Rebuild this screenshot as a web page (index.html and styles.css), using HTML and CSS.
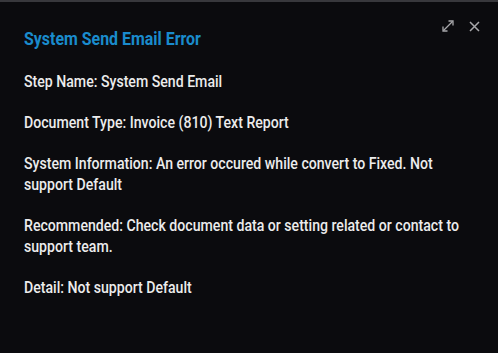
FILE: index.html
```html
<!DOCTYPE html>
<html lang="en">
<head>
<meta charset="utf-8">
<title>System Send Email Error</title>
<link rel="stylesheet" href="styles.css">
</head>
<body>
<div class="dialog">
  <div class="actions">
    <button class="icon-btn" aria-label="Expand">
      <svg width="12" height="12" viewBox="0 0 12 12" fill="none" stroke="currentColor" stroke-width="1.3">
        <path d="M1.5 10.5 L10.5 1.5"/>
        <path d="M6.5 1 H11 V5.5"/>
        <path d="M1 6.5 V11 H5.5"/>
      </svg>
    </button>
    <button class="icon-btn" aria-label="Close">
      <svg width="11" height="11" viewBox="0 0 11 11" fill="none" stroke="currentColor" stroke-width="1.5">
        <path d="M1 1 L10 10 M10 1 L1 10"/>
      </svg>
    </button>
  </div>
  <h1 class="title">System Send Email Error</h1>
  <p class="line">Step Name: System Send Email</p>
  <p class="line">Document Type: Invoice (810) Text Report</p>
  <p class="line">System Information: An error occured while convert to Fixed. Not support Default</p>
  <p class="line">Recommended: Check document data or setting related or contact to support team.</p>
  <p class="line">Detail: Not support Default</p>
</div>
</body>
</html>
```

FILE: styles.css
```css
html, body {
  margin: 0;
  padding: 0;
  background: #0b0b0e;
  height: 100%;
}
body {
  border-top: 2px solid #38383c;
  box-sizing: border-box;
  font-family: Roboto, "Noto Sans", sans-serif;
  overflow: hidden;
}
.dialog {
  position: relative;
  padding: 25px 24px 24px 24px;
  color: #ececec;
}
.actions {
  position: absolute;
  top: 18px;
  right: 18px;
  display: flex;
  gap: 15px;
  align-items: center;
}
.icon-btn {
  background: none;
  border: 0;
  padding: 0;
  color: #a8a8ab;
  display: flex;
}
.title {
  margin: 0 0 20px 0;
  font-size: 18px;
  font-weight: 700;
  color: #1a8bcc;
  line-height: 24px;
  width: 300px;
  transform: scaleX(0.885);
  transform-origin: 0 0;
}
.line {
  margin: 0 0 20px 0;
  font-size: 16px;
  font-weight: 500;
  line-height: 21px;
  width: 510px;
  transform: scaleX(0.882);
  transform-origin: 0 0;
}
```
